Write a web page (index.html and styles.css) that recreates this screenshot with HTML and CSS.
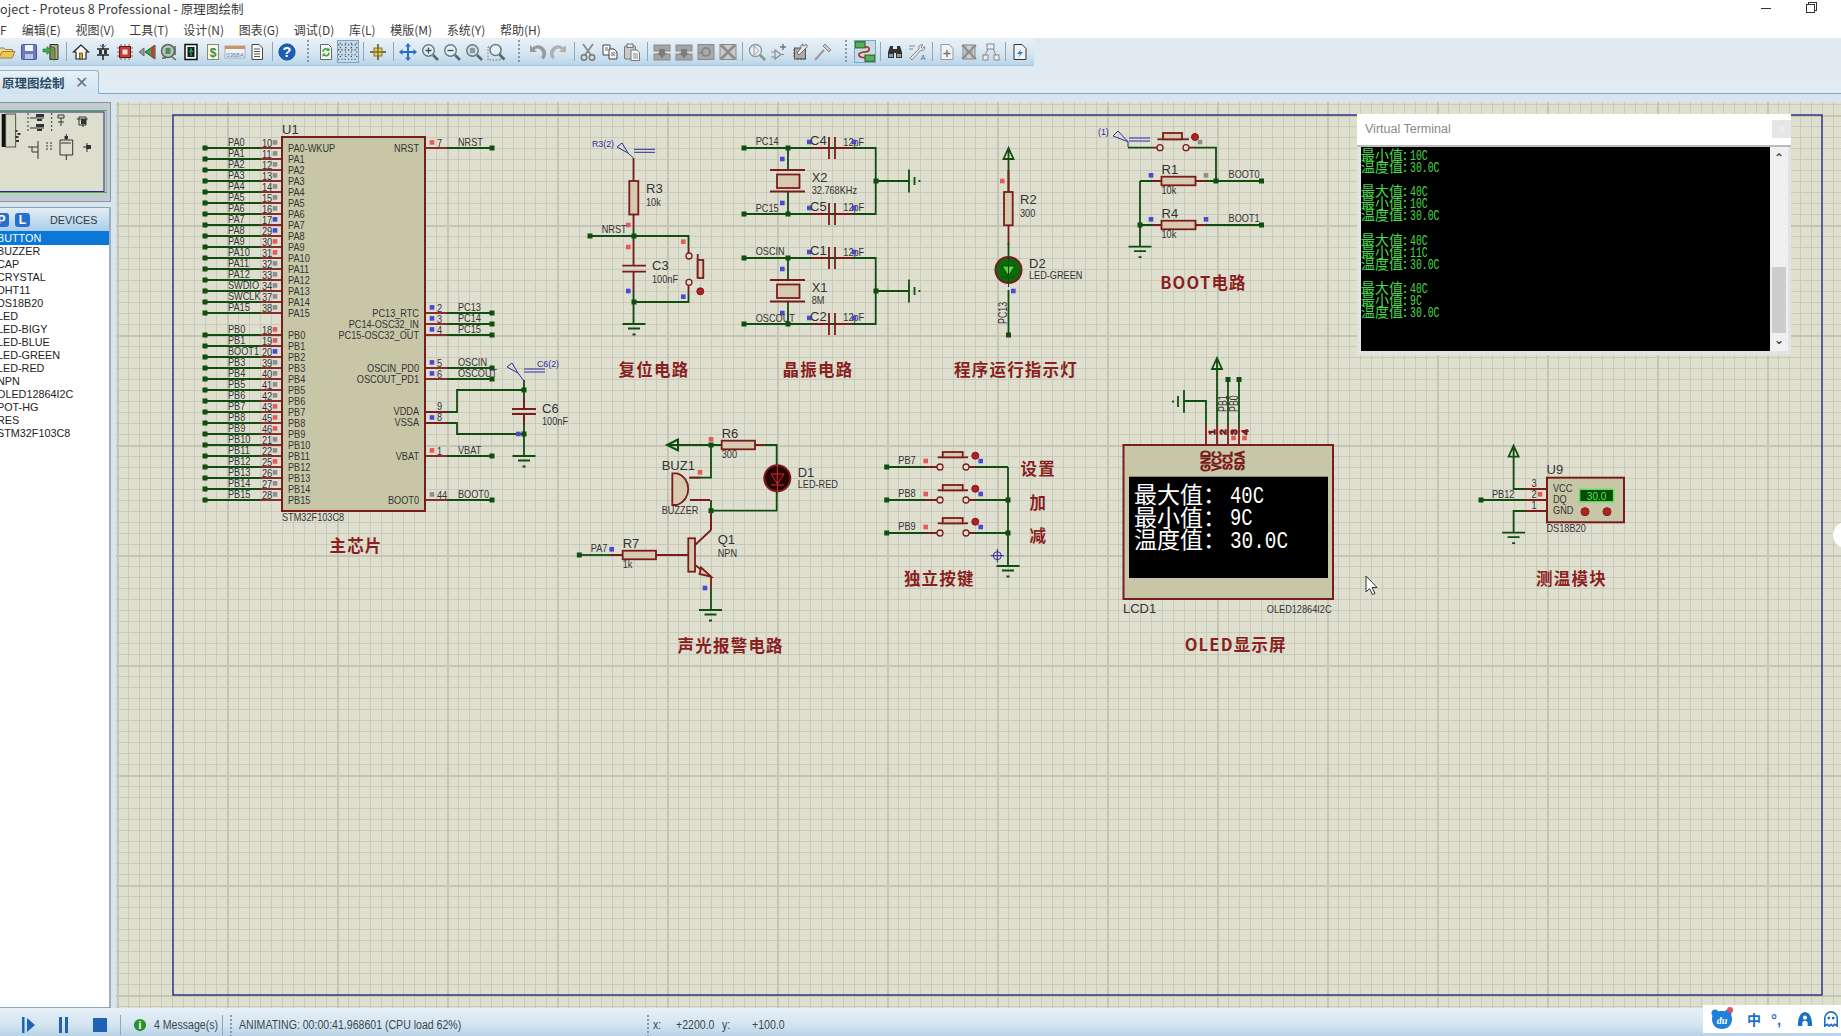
FILE: index.html
```html
<!DOCTYPE html>
<html lang="zh">
<head>
<meta charset="utf-8">
<title>Proteus 8 Professional - 原理图绘制</title>
<link rel="stylesheet" href="styles.css">
</head>
<body>
<svg class="sprite" aria-hidden="true">
<defs>
<symbol id="i-folder" viewBox="0 0 18 18"><path d="M1 15V5h5l1.500 1.500h7V9" fill="#f3d98a" stroke="#9a8240"/><path d="M1 15l3-6.500h13L14 15z" fill="#ecc757" stroke="#9a8240"/></symbol>
<symbol id="i-save" viewBox="0 0 18 18"><rect x="1.500" y="1.500" width="15" height="15" rx="1" fill="#6e78bd" stroke="#4c5694"/><rect x="5" y="2" width="8" height="6" fill="#f2f4fb"/><rect x="5" y="11" width="8" height="5" fill="#bcc5e6"/></symbol>
<symbol id="i-import" viewBox="0 0 18 18"><path d="M8 1.500h8v15H8z" fill="#a9b27a" stroke="#333"/><path d="M8 3l5 2v12l-5-1z" fill="#7f8f4c" stroke="#333" stroke-width=".6"/><path d="M1 6h4V3.500L9 7.500 5 11.500V9H1z" fill="#37b24a" stroke="#167028" stroke-width=".6"/></symbol>
<symbol id="i-home" viewBox="0 0 18 18"><path d="M9 2L1.500 9H4v7h10V9h2.500z" fill="#fffdf2" stroke="#222" stroke-width="1.200"/><rect x="7.500" y="10" width="3" height="6" fill="#d19a3a" stroke="#222" stroke-width=".6"/></symbol>
<symbol id="i-comp" viewBox="0 0 18 18"><path d="M9 1v5M9 12v5M3 6h12M3 12h12" stroke="#222" stroke-width="1.500" fill="none"/><path d="M5 7h3v4H5zM10 7h3v4h-3z" fill="#333"/><path d="M6 2l3 3 3-3" stroke="#667" fill="none"/></symbol>
<symbol id="i-chip" viewBox="0 0 18 18"><path d="M1 5h16M1 9h16M1 13h16M5 1v16M9 1v16M13 1v16" stroke="#7d6a50"/><rect x="3.500" y="3.500" width="11" height="11" fill="#c43a3a" stroke="#7a1010"/><rect x="6.500" y="6.500" width="5" height="5" fill="#f4dede"/></symbol>
<symbol id="i-tape" viewBox="0 0 18 18"><path d="M1 9l5-4v8z" fill="#9aa090" stroke="#667"/><path d="M7 9l10-7v14z" fill="#35a84a" stroke="#1d5e2a"/><path d="M13 4v10l4 2V2z" fill="#b04838"/></symbol>
<symbol id="i-gear" viewBox="0 0 18 18"><circle cx="8" cy="8" r="6.500" fill="#b9c3b5" stroke="#5c6a5c" stroke-width="1.500"/><rect x="5.500" y="5" width="5" height="6" fill="#4f8c5c"/><path d="M2 15h4M12 14l4 3M15 3v9" stroke="#55635a" stroke-width="1.500"/></symbol>
<symbol id="i-docg" viewBox="0 0 18 18"><rect x="3" y="1.500" width="12" height="15" fill="#f4f4ea" stroke="#111" stroke-width="1.500"/><rect x="5.500" y="4" width="7" height="10" fill="#10232c"/><path d="M9 5v8M7 9l2-2 2 2" stroke="#33cc55" fill="none"/></symbol>
<symbol id="i-dollar" viewBox="0 0 18 18"><rect x="3.500" y="1.500" width="11" height="15" fill="#f7f6e6" stroke="#8a8a78"/><text x="9" y="13.500" class="ic-text ic-green">$</text></symbol>
<symbol id="i-bom" viewBox="0 0 22 18"><rect x="1" y="3" width="20" height="12" fill="#eef3f7" stroke="#aab"/><rect x="1" y="3" width="20" height="3" fill="#d09060"/><text x="11" y="13.500" class="ic-mini">0368A</text></symbol>
<symbol id="i-doc" viewBox="0 0 18 18"><path d="M4 1.500h7l3.500 3.500v11.500H4z" fill="#fbfbf7" stroke="#444"/><path d="M6 6h6M6 8.500h6M6 11h6M6 13.500h6" stroke="#555"/></symbol>
<symbol id="i-help" viewBox="0 0 20 20"><circle cx="10" cy="10" r="9" fill="#1d5fb6" stroke="#124a92"/><text x="10" y="15.500" class="ic-text ic-q">?</text></symbol>
<symbol id="i-refresh" viewBox="0 0 18 18"><path d="M3.500 1.500h8l3 3v12h-11z" fill="#f4f7ee" stroke="#667"/><path d="M6 9a3 3 0 0 1 5-2.500M12 9.500a3 3 0 0 1-5 2.500" fill="none" stroke="#3ca13c" stroke-width="1.500"/><path d="M12.500 4.500v3.500H9zM5.500 14v-3.500H9z" fill="#3ca13c"/></symbol>
<symbol id="i-grid" viewBox="0 0 20 18"><path d="M1 3h18M1 7.500h18M1 12h18M1 16h18" stroke="#333" stroke-dasharray="1 2"/><path d="M3 1v16M8 1v16M13 1v16M18 1v16" stroke="#333" stroke-dasharray="1 3"/></symbol>
<symbol id="i-origin" viewBox="0 0 18 18"><path d="M9 1v16M1 9h16" stroke="#5a4a20" stroke-width="1.500"/><rect x="5" y="5" width="8" height="8" fill="#e5c960" stroke="#8a7420"/><path d="M9 5v8M5 9h8" stroke="#5a4a20"/></symbol>
<symbol id="i-move" viewBox="0 0 18 18"><path d="M9 0l3 3.500h-2V8h4.500V6L18 9l-3.500 3v-2H10v4.500h2L9 18l-3-3.500h2V10H3.500v2L0 9l3.500-3v2H8V3.500H6z" fill="#2a6fc7"/></symbol>
<symbol id="i-zin" viewBox="0 0 18 18"><circle cx="7.500" cy="7.500" r="5.800" fill="#e6eef2" stroke="#667a80" stroke-width="1.400"/><path d="M12 12l5 5" stroke="#59666c" stroke-width="2.500"/><path d="M4.500 7.500h6M7.500 4.500v6" stroke="#34505a" stroke-width="1.300"/></symbol>
<symbol id="i-zout" viewBox="0 0 18 18"><circle cx="7.500" cy="7.500" r="5.800" fill="#e6eef2" stroke="#667a80" stroke-width="1.400"/><path d="M12 12l5 5" stroke="#59666c" stroke-width="2.500"/><path d="M4.500 7.500h6" stroke="#34505a" stroke-width="1.300"/></symbol>
<symbol id="i-zall" viewBox="0 0 18 18"><circle cx="7.500" cy="7.500" r="5.800" fill="#cfdbe0" stroke="#667a80" stroke-width="1.400"/><path d="M12 12l5 5" stroke="#59666c" stroke-width="2.500"/><rect x="5" y="5" width="5" height="5" fill="#889aa3"/></symbol>
<symbol id="i-zarea" viewBox="0 0 18 18"><path d="M1 4h13v13H1z" fill="none" stroke="#777" stroke-dasharray="1.500 1.500"/><circle cx="8.500" cy="7" r="5.500" fill="#e6eef2" stroke="#667a80" stroke-width="1.400"/><path d="M12.500 11.500l5 5" stroke="#59666c" stroke-width="2.500"/></symbol>
<symbol id="i-undo" viewBox="0 0 18 18"><path d="M2 2v7h7L6.500 6.500A5 5 0 0 1 13 14l2.500 2.500A8 8 0 0 0 4.500 4.500z" fill="#9a9a9a"/></symbol>
<symbol id="i-redo" viewBox="0 0 18 18"><path d="M16 2v7H9l2.500-2.500A5 5 0 0 0 5 14l-2.500 2.500A8 8 0 0 1 13.500 4.500z" fill="#b0b0b0"/></symbol>
<symbol id="i-cut" viewBox="0 0 18 18"><path d="M4 1l8 11M14 1L6 12" stroke="#8a8a8a" stroke-width="1.800"/><circle cx="5" cy="14.500" r="2.700" fill="none" stroke="#777" stroke-width="1.500"/><circle cx="13" cy="14.500" r="2.700" fill="none" stroke="#777" stroke-width="1.500"/></symbol>
<symbol id="i-copy" viewBox="0 0 18 18"><path d="M2 2h7v10H2z" fill="#fff" stroke="#444"/><path d="M8 6h5l3 3v7H8z" fill="#f4f4f4" stroke="#444"/><path d="M10 10h4M10 12h4M4 5h3M4 7h3" stroke="#666"/></symbol>
<symbol id="i-paste" viewBox="0 0 18 18"><rect x="1.500" y="3" width="11" height="13" rx="1" fill="#c9c9c9" stroke="#777"/><rect x="4" y="1" width="6" height="3.500" fill="#e7e7e7" stroke="#777"/><path d="M8 7h6l2.500 2.500v8H8z" fill="#fafafa" stroke="#777"/><path d="M10 11h5M10 13h5M10 15h5" stroke="#888"/></symbol>
<symbol id="i-b1" viewBox="0 0 18 18"><rect x="1" y="2" width="16" height="6" fill="#a4a4a4" stroke="#8a8a8a"/><rect x="1" y="11" width="16" height="6" fill="#a4a4a4" stroke="#8a8a8a"/><path d="M6 6h6v4h2l-5 5-5-5h2z" fill="#7d7d7d"/></symbol>
<symbol id="i-b2" viewBox="0 0 18 18"><rect x="1" y="1.500" width="16" height="15" fill="#a8a8a8" stroke="#8a8a8a"/><circle cx="9" cy="9" r="4" fill="none" stroke="#7d7d7d" stroke-width="1.500"/><path d="M2 9h3l-1.500 2z" fill="#7d7d7d"/></symbol>
<symbol id="i-b3" viewBox="0 0 18 18"><rect x="1" y="1.500" width="16" height="15" fill="#c8c8c8" stroke="#8a8a8a"/><path d="M2 2l14 14M16 2L2 16" stroke="#8c8c8c" stroke-width="2.500"/></symbol>
<symbol id="i-ssim" viewBox="0 0 18 18"><circle cx="7.500" cy="7.500" r="6" fill="#eef2f2" stroke="#8a9a9a" stroke-width="1.400"/><path d="M12 12l5 5" stroke="#8a8f8f" stroke-width="2.500"/><path d="M6 3v9M6 3l5 4.500L6 12" fill="none" stroke="#99a"/></symbol>
<symbol id="i-amp" viewBox="0 0 18 18"><path d="M5 7v9l6-4.500zM1 9h4M1 14h4M11 11.500h3" fill="none" stroke="#8a8f8f" stroke-width="1.200"/><path d="M13 1v6M10 4h6" stroke="#777" stroke-width="1.500"/></symbol>
<symbol id="i-chipw" viewBox="0 0 18 18"><rect x="2.500" y="5" width="11" height="11" fill="#aaa" stroke="#555"/><path d="M1 7h2M1 10h2M1 13h2M6 17v-2M9 17v-2M12 17v-2" stroke="#555"/><path d="M7 12l8-8a2.500 2.500 0 0 0-1-3l-1.500 2-2-.5L11 1a3 3 0 0 0-2 4L5 10z" fill="#e8e8e8" stroke="#555" stroke-width=".8"/></symbol>
<symbol id="i-hammer" viewBox="0 0 18 18"><path d="M1 17L10 7" stroke="#999" stroke-width="2"/><path d="M9 3l6 6 2-2-6-6z" fill="#c9c9c9" stroke="#888"/></symbol>
<symbol id="i-net" viewBox="0 0 18 18"><path d="M8 5c6 0 6 4 0 4.500S3 14 9 14" fill="none" stroke="#b33828" stroke-width="1.500"/><rect x="1" y="1" width="8" height="5" fill="#58b058" stroke="#2e6e2e"/><rect x="9" y="12" width="8" height="5" fill="#58b058" stroke="#2e6e2e"/></symbol>
<symbol id="i-bino" viewBox="0 0 18 18"><path d="M2 9l2-6h3v3h4V3h3l2 6v6H10V10H8v5H2z" fill="#333"/><rect x="3" y="11" width="4" height="3" fill="#999"/><rect x="11" y="11" width="4" height="3" fill="#999"/></symbol>
<symbol id="i-wrencha" viewBox="0 0 18 18"><path d="M1 3h6M1 6h4" stroke="#888"/><path d="M2 15L11 6a3 3 0 0 1 4-4l-2 2 1.500 1.500 2-2a3 3 0 0 1-4 4L4 17z" fill="#e8e8e8" stroke="#888"/><text x="15" y="17" class="ic-a">A</text></symbol>
<symbol id="i-plus" viewBox="0 0 18 18"><path d="M3 1.500h8l4 4v11H3z" fill="#f1f3f5" stroke="#999"/><path d="M9 7v7M5.500 10.500h7" stroke="#777" stroke-width="1.500"/></symbol>
<symbol id="i-xsheet" viewBox="0 0 18 18"><path d="M3 2h12v14H3z" fill="#ccc" stroke="#888"/><path d="M2 2l14 14M16 2L2 16" stroke="#8a8a8a" stroke-width="1.800"/><path d="M6 1v16M12 1v16" stroke="#999"/></symbol>
<symbol id="i-tree" viewBox="0 0 18 18"><rect x="5" y="1" width="7" height="5" fill="#eee" stroke="#888"/><rect x="1" y="12" width="5" height="5" fill="#eee" stroke="#888"/><rect x="12" y="12" width="5" height="5" fill="#eee" stroke="#888"/><path d="M6 6l-3 6M11 6l3 6" stroke="#888"/></symbol>
<symbol id="i-bolt" viewBox="0 0 18 18"><path d="M3 1.500h8l4 4v11H3z" fill="#eef4f8" stroke="#333"/><path d="M10 6L6 11h3l-2 4 5-6H9z" fill="#2a80cc"/></symbol>

<pattern id="grid-minor" patternUnits="userSpaceOnUse" x="7" y="5" width="11" height="11"><rect class="gm" width="11" height="1"/><rect class="gm" width="1" height="11"/></pattern>
<pattern id="grid-major" patternUnits="userSpaceOnUse" x="117" y="115" width="110" height="110"><rect class="gM" width="110" height="2"/><rect class="gM" width="2" height="110"/></pattern>

<rect id="dot" class="d" x="-2.500" y="-2.500" width="5" height="5"/>
<rect id="m" x="-2.300" y="-2.300" width="4.600" height="4.600"/>
<g id="pl"><path class="w" d="M205 0H260"/><path class="p" d="M260 0H281"/><use href="#dot" x="205"/></g>
<g id="pr"><path class="p" d="M425 0H447"/><path class="w" d="M447 0H492"/><use href="#dot" x="492"/></g>
<g id="gnd"><path class="w" d="M-11.500 0H11.500M-6 4.500H6M-1.500 10.500H1.500"/></g>
<path id="pw" class="w" d="M0 0L-5 11H5ZM0 0V11"/>
<g id="gndh"><path class="w" d="M0 -11.500V11.500M5.500 -4V4M10.500 -1V1"/></g>
<g id="xtal"><path class="p" d="M-18 0H17M-18 21.500H17"/><rect class="b2" x="-11" y="4.500" width="22.500" height="13.500"/></g>
<g id="capvb"><rect class="cv" x="812" y="-1" width="40" height="2"/><path class="p" d="M812 0H829M835 0H852M829 -11V11M835 -11V11"/></g>
<g id="xcell">
  <path class="w" d="M744 0H875.700V66H744"/>
  <path class="w" d="M788 0V22M788 44V66"/>
  <use href="#dot" x="744"/><use href="#dot" x="744" y="66"/><use href="#dot" x="788"/><use href="#dot" x="788" y="66"/>
  <use href="#xtal" x="788" y="22"/>
  <use href="#capvb"/><use href="#capvb" y="66"/>
  <use href="#dot" x="876" y="33"/>
  <path class="w" d="M876 33H909"/>
  <use href="#gndh" x="909" y="33"/>
  <use class="mb" href="#m" x="782.300" y="11"/><use class="mb" href="#m" x="782.300" y="55"/>
  <text class="t" x="843.300" y="-2.500">12pF</text><text class="t" x="843.300" y="63.500">12pF</text>
  <use class="mb" href="#m" x="809.300" y="-6"/><use class="mb" href="#m" x="854" y="-6"/>
  <use class="mb" href="#m" x="809.300" y="60"/><use class="mb" href="#m" x="854" y="60"/>
</g>
<g id="btn">
  <path class="w" d="M886.700 0H925M972 0H1008"/><path class="p" d="M925 0H937M969 0H975"/>
  <use href="#dot" x="886.700"/>
  <circle class="c" cx="940" cy="0" r="3"/><circle class="c" cx="966" cy="0" r="3"/>
  <path class="p" d="M937.700 -9.700H968"/><rect class="b2" x="942.700" y="-15" width="20" height="5.300"/>
  <circle class="rd" cx="975.300" cy="-11.300" r="3.500"/>
  <use class="mb" href="#m" x="980.700" y="-6"/><use class="mr" href="#m" x="925.700" y="-6"/>
</g>
<g id="res"><rect class="b2" x="0" y="-4.300" width="34" height="8.600"/></g>
</defs>
</svg>

<div class="app">
  <header class="titlebar">
    <span class="title-text">oject - Proteus 8 Professional - 原理图绘制</span>
    <span class="win-btns"><i class="win-min"></i><i class="win-restore"></i></span>
  </header>
  <nav class="menubar">
    <span class="menu-first">F)</span><span>编辑(E)</span><span>视图(V)</span><span>工具(T)</span><span>设计(N)</span><span>图表(G)</span><span>调试(D)</span><span>库(L)</span><span>模版(M)</span><span>系统(Y)</span><span>帮助(H)</span>
  </nav>
  <div class="toolband">
    <div class="toolbar">
      <svg class="ic first"><use href="#i-folder"/></svg><svg class="ic"><use href="#i-save"/></svg><svg class="ic"><use href="#i-import"/></svg><i class="sep"></i>
      <svg class="ic"><use href="#i-home"/></svg><svg class="ic"><use href="#i-comp"/></svg><svg class="ic"><use href="#i-chip"/></svg><svg class="ic"><use href="#i-tape"/></svg><svg class="ic"><use href="#i-gear"/></svg><svg class="ic"><use href="#i-docg"/></svg><svg class="ic"><use href="#i-dollar"/></svg><svg class="ic"><use href="#i-bom"/></svg><svg class="ic"><use href="#i-doc"/></svg><i class="sep"></i>
      <svg class="ic"><use href="#i-help"/></svg><i class="grip g1"></i>
      <svg class="ic"><use href="#i-refresh"/></svg><svg class="ic on"><use href="#i-grid"/></svg><i class="sep"></i><svg class="ic"><use href="#i-origin"/></svg><i class="sep"></i>
      <svg class="ic"><use href="#i-move"/></svg><svg class="ic"><use href="#i-zin"/></svg><svg class="ic"><use href="#i-zout"/></svg><svg class="ic"><use href="#i-zall"/></svg><svg class="ic"><use href="#i-zarea"/></svg><i class="grip g2"></i>
      <svg class="ic"><use href="#i-undo"/></svg><svg class="ic"><use href="#i-redo"/></svg><i class="sep s2"></i>
      <svg class="ic"><use href="#i-cut"/></svg><svg class="ic"><use href="#i-copy"/></svg><svg class="ic"><use href="#i-paste"/></svg><i class="sep"></i>
      <svg class="ic"><use href="#i-b1"/></svg><svg class="ic"><use href="#i-b1"/></svg><svg class="ic"><use href="#i-b2"/></svg><svg class="ic"><use href="#i-b3"/></svg><i class="sep s3"></i>
      <svg class="ic"><use href="#i-ssim"/></svg><svg class="ic"><use href="#i-amp"/></svg><svg class="ic"><use href="#i-chipw"/></svg><svg class="ic"><use href="#i-hammer"/></svg><i class="grip g3"></i>
      <svg class="ic on"><use href="#i-net"/></svg><i class="sep"></i>
      <svg class="ic"><use href="#i-bino"/></svg><svg class="ic"><use href="#i-wrencha"/></svg><i class="sep"></i>
      <svg class="ic"><use href="#i-plus"/></svg><svg class="ic"><use href="#i-xsheet"/></svg><svg class="ic"><use href="#i-tree"/></svg><i class="sep s3"></i>
      <svg class="ic"><use href="#i-bolt"/></svg>
    </div>
  </div>
  <div class="tabband">
    <div class="tab"><span class="tab-label">原理图绘制</span><span class="tab-x">✕</span></div>
  </div>
  <main class="main">
    <aside class="side">
      <div class="overview">
        <svg class="ov-svg" viewBox="0 0 107 83">
          <rect class="ov-frame" x="-3" y="0.500" width="110" height="82"/>
          <rect class="ov-line" x="-4" y="2" width="108" height="79.500"/>
          <rect class="ov-bar" x="1.700" y="4" width="4" height="33"/>
          <rect class="ov-chip" x="5.700" y="4" width="10" height="33"/>
          <path class="ov-blk" d="M15.500 20h2v2h-2zM15.500 26h3v2h-3zM17.500 23h3v2h-3zM16 30h3v2h-3z"/>
          <path class="ov-dash" d="M28 3v20M51.700 3v20"/>
          <path class="ov-wire" d="M58 5h6v3h-6zM58 12h6M61 8v8M76.700 9h11M79 7h7v8h-7zM83 11v6M30 8h14M30 18h14M38 31v6M32 37h6v5h-6zM38 42v7M28 37h4M60 30h12.700v15H60zM66.300 24v6M66.300 45v5M61 33h10M83 37h4M87 33v9"/>
          <path class="ov-blk" d="M36 4h8v3h-8zM37 9h5v2h-5zM36 14h8v3h-8zM37 19h5v2h-5zM64.500 26h3.500v3h-3.500zM81 9h5v5h-5zM86 35h5v4h-5z"/>
          <path class="ov-dash" d="M46 33h8M46 36h8M46 39h8"/>
        </svg>
      </div>
      <section class="devices">
        <div class="dev-head"><b class="pl-btn p">P</b><b class="pl-btn l">L</b><span class="dev-title">DEVICES</span></div>
        <ul class="dev-list">
          <li class="sel">BUTTON</li><li>BUZZER</li><li>CAP</li><li>CRYSTAL</li><li>DHT11</li><li>DS18B20</li><li>LED</li><li>LED-BIGY</li><li>LED-BLUE</li><li>LED-GREEN</li><li>LED-RED</li><li>NPN</li><li>OLED12864I2C</li><li>POT-HG</li><li>RES</li><li>STM32F103C8</li>
        </ul>
      </section>
    </aside>
    <section class="canvas">
      <svg class="sheet" viewBox="116 102 1725 906" width="1725" height="906">
        <rect x="116" y="102" width="1725" height="906" class="bg"/>
        <rect x="116" y="102" width="1725" height="906" fill="url(#grid-minor)"/>
        <rect x="116" y="102" width="1725" height="906" fill="url(#grid-major)"/>
        <rect class="border" x="173" y="115" width="1649" height="880"/>

        <!-- U1 -->
        <rect class="chip" x="282" y="137" width="143" height="374"/>
        <text class="big" x="282" y="134">U1</text>
        <text class="t" x="282" y="521">STM32F103C8</text>
        <text class="ttl" x="356" y="552">主芯片</text>

        <g transform="translate(0 148)"><use href="#pl"/><text class="t" x="228" y="-2">PA0</text><text class="t" x="262" y="-1.500">10</text><use class="mg" href="#m" x="275" y="-5.600"/><text class="t" x="288" y="3.500">PA0-WKUP</text></g>
        <g transform="translate(0 159)"><use href="#pl"/><text class="t" x="228" y="-2">PA1</text><text class="t" x="262" y="-1.500">11</text><use class="mg" href="#m" x="275" y="-5.600"/><text class="t" x="288" y="3.500">PA1</text></g>
        <g transform="translate(0 170)"><use href="#pl"/><text class="t" x="228" y="-2">PA2</text><text class="t" x="262" y="-1.500">12</text><use class="mg" href="#m" x="275" y="-5.600"/><text class="t" x="288" y="3.500">PA2</text></g>
        <g transform="translate(0 181)"><use href="#pl"/><text class="t" x="228" y="-2">PA3</text><text class="t" x="262" y="-1.500">13</text><use class="mg" href="#m" x="275" y="-5.600"/><text class="t" x="288" y="3.500">PA3</text></g>
        <g transform="translate(0 192)"><use href="#pl"/><text class="t" x="228" y="-2">PA4</text><text class="t" x="262" y="-1.500">14</text><use class="mg" href="#m" x="275" y="-5.600"/><text class="t" x="288" y="3.500">PA4</text></g>
        <g transform="translate(0 203)"><use href="#pl"/><text class="t" x="228" y="-2">PA5</text><text class="t" x="262" y="-1.500">15</text><use class="mg" href="#m" x="275" y="-5.600"/><text class="t" x="288" y="3.500">PA5</text></g>
        <g transform="translate(0 214)"><use href="#pl"/><text class="t" x="228" y="-2">PA6</text><text class="t" x="262" y="-1.500">16</text><use class="mg" href="#m" x="275" y="-5.600"/><text class="t" x="288" y="3.500">PA6</text></g>
        <g transform="translate(0 225)"><use href="#pl"/><text class="t" x="228" y="-2">PA7</text><text class="t" x="262" y="-1.500">17</text><use class="mb" href="#m" x="275" y="-5.600"/><text class="t" x="288" y="3.500">PA7</text></g>
        <g transform="translate(0 236)"><use href="#pl"/><text class="t" x="228" y="-2">PA8</text><text class="t" x="262" y="-1.500">29</text><use class="mb" href="#m" x="275" y="-5.600"/><text class="t" x="288" y="3.500">PA8</text></g>
        <g transform="translate(0 247)"><use href="#pl"/><text class="t" x="228" y="-2">PA9</text><text class="t" x="262" y="-1.500">30</text><use class="mr" href="#m" x="275" y="-5.600"/><text class="t" x="288" y="3.500">PA9</text></g>
        <g transform="translate(0 258)"><use href="#pl"/><text class="t" x="228" y="-2">PA10</text><text class="t" x="262" y="-1.500">31</text><use class="mr" href="#m" x="275" y="-5.600"/><text class="t" x="288" y="3.500">PA10</text></g>
        <g transform="translate(0 269)"><use href="#pl"/><text class="t" x="228" y="-2">PA11</text><text class="t" x="262" y="-1.500">32</text><use class="mg" href="#m" x="275" y="-5.600"/><text class="t" x="288" y="3.500">PA11</text></g>
        <g transform="translate(0 280)"><use href="#pl"/><text class="t" x="228" y="-2">PA12</text><text class="t" x="262" y="-1.500">33</text><use class="mg" href="#m" x="275" y="-5.600"/><text class="t" x="288" y="3.500">PA12</text></g>
        <g transform="translate(0 291)"><use href="#pl"/><text class="t" x="228" y="-2">SWDIO</text><text class="t" x="262" y="-1.500">34</text><use class="mg" href="#m" x="275" y="-5.600"/><text class="t" x="288" y="3.500">PA13</text></g>
        <g transform="translate(0 302)"><use href="#pl"/><text class="t" x="228" y="-2">SWCLK</text><text class="t" x="262" y="-1.500">37</text><use class="mg" href="#m" x="275" y="-5.600"/><text class="t" x="288" y="3.500">PA14</text></g>
        <g transform="translate(0 313)"><use href="#pl"/><text class="t" x="228" y="-2">PA15</text><text class="t" x="262" y="-1.500">38</text><use class="mg" href="#m" x="275" y="-5.600"/><text class="t" x="288" y="3.500">PA15</text></g>

        <g transform="translate(0 335)"><use href="#pl"/><text class="t" x="228" y="-2">PB0</text><text class="t" x="262" y="-1.500">18</text><use class="mr" href="#m" x="275" y="-5.600"/><text class="t" x="288" y="3.500">PB0</text></g>
        <g transform="translate(0 346)"><use href="#pl"/><text class="t" x="228" y="-2">PB1</text><text class="t" x="262" y="-1.500">19</text><use class="mr" href="#m" x="275" y="-5.600"/><text class="t" x="288" y="3.500">PB1</text></g>
        <g transform="translate(0 357)"><use href="#pl"/><text class="t" x="228" y="-2">BOOT1</text><text class="t" x="262" y="-1.500">20</text><use class="mb" href="#m" x="275" y="-5.600"/><text class="t" x="288" y="3.500">PB2</text></g>
        <g transform="translate(0 368)"><use href="#pl"/><text class="t" x="228" y="-2">PB3</text><text class="t" x="262" y="-1.500">39</text><use class="mg" href="#m" x="275" y="-5.600"/><text class="t" x="288" y="3.500">PB3</text></g>
        <g transform="translate(0 379)"><use href="#pl"/><text class="t" x="228" y="-2">PB4</text><text class="t" x="262" y="-1.500">40</text><use class="mg" href="#m" x="275" y="-5.600"/><text class="t" x="288" y="3.500">PB4</text></g>
        <g transform="translate(0 390)"><use href="#pl"/><text class="t" x="228" y="-2">PB5</text><text class="t" x="262" y="-1.500">41</text><use class="mg" href="#m" x="275" y="-5.600"/><text class="t" x="288" y="3.500">PB5</text></g>
        <g transform="translate(0 401)"><use href="#pl"/><text class="t" x="228" y="-2">PB6</text><text class="t" x="262" y="-1.500">42</text><use class="mg" href="#m" x="275" y="-5.600"/><text class="t" x="288" y="3.500">PB6</text></g>
        <g transform="translate(0 412)"><use href="#pl"/><text class="t" x="228" y="-2">PB7</text><text class="t" x="262" y="-1.500">43</text><use class="mr" href="#m" x="275" y="-5.600"/><text class="t" x="288" y="3.500">PB7</text></g>
        <g transform="translate(0 423)"><use href="#pl"/><text class="t" x="228" y="-2">PB8</text><text class="t" x="262" y="-1.500">45</text><use class="mr" href="#m" x="275" y="-5.600"/><text class="t" x="288" y="3.500">PB8</text></g>
        <g transform="translate(0 434)"><use href="#pl"/><text class="t" x="228" y="-2">PB9</text><text class="t" x="262" y="-1.500">46</text><use class="mr" href="#m" x="275" y="-5.600"/><text class="t" x="288" y="3.500">PB9</text></g>
        <g transform="translate(0 445)"><use href="#pl"/><text class="t" x="228" y="-2">PB10</text><text class="t" x="262" y="-1.500">21</text><use class="mg" href="#m" x="275" y="-5.600"/><text class="t" x="288" y="3.500">PB10</text></g>
        <g transform="translate(0 456)"><use href="#pl"/><text class="t" x="228" y="-2">PB11</text><text class="t" x="262" y="-1.500">22</text><use class="mg" href="#m" x="275" y="-5.600"/><text class="t" x="288" y="3.500">PB11</text></g>
        <g transform="translate(0 467)"><use href="#pl"/><text class="t" x="228" y="-2">PB12</text><text class="t" x="262" y="-1.500">25</text><use class="mr" href="#m" x="275" y="-5.600"/><text class="t" x="288" y="3.500">PB12</text></g>
        <g transform="translate(0 478)"><use href="#pl"/><text class="t" x="228" y="-2">PB13</text><text class="t" x="262" y="-1.500">26</text><use class="mg" href="#m" x="275" y="-5.600"/><text class="t" x="288" y="3.500">PB13</text></g>
        <g transform="translate(0 489)"><use href="#pl"/><text class="t" x="228" y="-2">PB14</text><text class="t" x="262" y="-1.500">27</text><use class="mg" href="#m" x="275" y="-5.600"/><text class="t" x="288" y="3.500">PB14</text></g>
        <g transform="translate(0 500)"><use href="#pl"/><text class="t" x="228" y="-2">PB15</text><text class="t" x="262" y="-1.500">28</text><use class="mg" href="#m" x="275" y="-5.600"/><text class="t" x="288" y="3.500">PB15</text></g>

        <g transform="translate(0 148)"><use href="#pr"/><text class="t" x="458" y="-2">NRST</text><text class="t" x="437" y="-1.500">7</text><use class="mr" href="#m" x="432" y="-5.600"/><text class="t e" x="419" y="3.500">NRST</text></g>
        <g transform="translate(0 313)"><use href="#pr"/><text class="t" x="458" y="-2">PC13</text><text class="t" x="437" y="-1.500">2</text><use class="mb" href="#m" x="432" y="-5.600"/><text class="t e" x="419" y="3.500">PC13_RTC</text></g>
        <g transform="translate(0 324)"><use href="#pr"/><text class="t" x="458" y="-2">PC14</text><text class="t" x="437" y="-1.500">3</text><use class="mb" href="#m" x="432" y="-5.600"/><text class="t e" x="419" y="3.500">PC14-OSC32_IN</text></g>
        <g transform="translate(0 335)"><use href="#pr"/><text class="t" x="458" y="-2">PC15</text><text class="t" x="437" y="-1.500">4</text><use class="mb" href="#m" x="432" y="-5.600"/><text class="t e" x="419" y="3.500">PC15-OSC32_OUT</text></g>
        <g transform="translate(0 368)"><use href="#pr"/><text class="t" x="458" y="-2">OSCIN</text><text class="t" x="437" y="-1.500">5</text><use class="mb" href="#m" x="432" y="-5.600"/><text class="t e" x="419" y="3.500">OSCIN_PD0</text></g>
        <g transform="translate(0 379)"><use href="#pr"/><text class="t" x="458" y="-2">OSCOUT</text><text class="t" x="437" y="-1.500">6</text><use class="mb" href="#m" x="432" y="-5.600"/><text class="t e" x="419" y="3.500">OSCOUT_PD1</text></g>
        <g transform="translate(0 456)"><use href="#pr"/><text class="t" x="458" y="-2">VBAT</text><text class="t" x="437" y="-1.500">1</text><use class="mr" href="#m" x="432" y="-5.600"/><text class="t e" x="419" y="3.500">VBAT</text></g>
        <g transform="translate(0 500)"><use href="#pr"/><text class="t" x="458" y="-2">BOOT0</text><text class="t" x="437" y="-1.500">44</text><use class="mg" href="#m" x="432" y="-5.600"/><text class="t e" x="419" y="3.500">BOOT0</text></g>
        <path class="p" d="M425 412H447M425 423H447"/>
        <path class="w" d="M447 412H457V390H524M447 423H457V434H524"/>
        <text class="t e" x="419" y="415.500">VDDA</text><text class="t e" x="419" y="426.500">VSSA</text>
        <text class="t" x="437" y="410.500">9</text><text class="t" x="437" y="421.500">8</text>
        <use class="mb" href="#m" x="432" y="417.500"/>

        <!-- C6 -->
        <path class="w" d="M524 380V409M524 414V456"/>
        <path class="p" d="M512 409H536M512 414H536M524 398V409M524 414V425"/>
        <use href="#dot" x="524" y="390"/><use href="#dot" x="524" y="434"/>
        <use class="mb" href="#m" x="518.300" y="434"/>
        <use href="#gnd" x="524" y="456"/>
        <text class="big" x="542" y="413">C6</text><text class="t" x="542" y="425">100nF</text>
        <path class="prb" d="M518 373L507 367 512 363ZM518 373L524 381"/>
        <path class="prb" d="M524 369H545M524 372H545"/>
        <text class="tb" x="537" y="367">C6(2)</text>

        <!-- Reset -->
        <path class="prb" d="M628 153L617 147 622 143ZM628 153L633.500 158"/>
        <path class="prb" d="M634 149.300H655M634 152.300H655"/>
        <text class="tb" x="592" y="147">R3(2)</text>
        <path class="p" d="M633.500 158V181M633.500 214V228M633.500 240V266M633.500 272V290"/>
        <path class="w" d="M633.500 228V240M633.500 290V324"/>
        <rect class="b2" x="629.300" y="181" width="9" height="33.500"/>
        <path class="p" d="M622.300 265.700H646M622.300 271.700H646"/>
        <path class="w" d="M590 236H688.500V245M688.500 293V302H633.500"/>
        <path class="p" d="M688.500 245V253M688.500 285V293"/>
        <use href="#dot" x="590" y="236"/><use href="#dot" x="634" y="236"/><use href="#dot" x="634" y="302"/>
        <circle class="c" cx="689" cy="256" r="3"/><circle class="c" cx="689" cy="282.300" r="3"/>
        <path class="p" d="M697.700 254V278"/><rect class="b2" x="697.700" y="260" width="5.600" height="18"/>
        <circle class="rd" cx="700.300" cy="291.300" r="3.500"/>
        <use class="mr" href="#m" x="628.300" y="225"/><use class="mr" href="#m" x="628.300" y="247"/><use class="mb" href="#m" x="628.300" y="291"/>
        <use class="mr" href="#m" x="683.300" y="241.700"/><use class="mb" href="#m" x="683.300" y="296.700"/>
        <use href="#gnd" x="634" y="324"/>
        <text class="big" x="646" y="193">R3</text><text class="t" x="646" y="206">10k</text>
        <text class="big" x="652" y="270">C3</text><text class="t" x="652" y="283">100nF</text>
        <text class="t" x="601.700" y="233.500">NRST</text>
        <text class="ttl" x="654" y="376">复位电路</text>

        <!-- Crystals -->
        <use href="#xcell" y="148"/><use href="#xcell" y="258"/>
        <text class="t" x="755.700" y="145.300">PC14</text><text class="t" x="755.700" y="211.700">PC15</text>
        <text class="t" x="755.700" y="255.300">OSCIN</text><text class="t" x="755.700" y="321.700">OSCOUT</text>
        <text class="big" x="811.700" y="182">X2</text><text class="t" x="811.700" y="194">32.768KHz</text>
        <text class="big" x="811.700" y="292">X1</text><text class="t" x="811.700" y="304">8M</text>
        <text class="big" x="810" y="145">C4</text><text class="big" x="810" y="211">C5</text>
        <text class="big" x="810" y="255">C1</text><text class="big" x="810" y="321">C2</text>
        <text class="ttl" x="818" y="376">晶振电路</text>

        <!-- Run LED -->
        <use href="#pw" x="1008.500" y="148"/>
        <path class="w" d="M1008.500 159V191.700M1008.500 290V335"/>
        <path class="p" d="M1008.500 170V192M1008.500 225V245"/>
        <path class="w" d="M1008.500 243V258"/>
        <rect class="b2" x="1004" y="192" width="8.700" height="33.300"/>
        <circle class="ledg" cx="1008.500" cy="270" r="13"/>
        <path class="ledgi" d="M1002 266H1015L1008.500 276ZM1002 277H1015M1008.500 257V287"/>
        <use href="#dot" x="1008.500" y="335"/>
        <use class="mr" href="#m" x="1002.300" y="181"/><use class="mb" href="#m" x="1013.300" y="291"/>
        <text class="trl" transform="translate(1006.500 324) rotate(-90) scale(.74 1)">PC13</text>
        <text class="big" x="1020" y="203.500">R2</text><text class="t" x="1020" y="217">300</text>
        <text class="big" x="1029" y="268">D2</text><text class="t" x="1029" y="279.500">LED-GREEN</text>
        <text class="ttl" x="1016" y="376">程序运行指示灯</text>

        <!-- BOOT -->
        <path class="prb" d="M1128 141.700L1113 136 1118 131ZM1128 141.700L1128 147"/>
        <path class="prb" d="M1129 138H1150M1129 141H1150"/>
        <text class="tb" x="1098" y="134.500">(1)</text>
        <path class="w" d="M1128 147.700H1152M1194 147.700H1216V181"/>
        <path class="p" d="M1152 147.700H1157M1189 147.700H1194"/>
        <circle class="c" cx="1160" cy="147.700" r="3"/><circle class="c" cx="1186" cy="147.700" r="3"/>
        <path class="p" d="M1157.400 139.300H1189"/><rect class="b2" x="1163" y="133" width="19" height="6.300"/>
        <circle class="rd" cx="1195" cy="137" r="3.500"/>
        <use class="mg" href="#m" x="1200" y="142"/>
        <path class="w" d="M1140 181V246.700M1140 181H1152M1140 225H1152M1205 181H1261.500M1205 225H1261.500"/>
        <path class="p" d="M1152 181H1162M1196 181H1205M1152 225H1162M1196 225H1205"/>
        <use href="#res" x="1161.500" y="181"/><use href="#res" x="1161.500" y="225"/>
        <use href="#dot" x="1216" y="181"/><use href="#dot" x="1261.500" y="181"/><use href="#dot" x="1140" y="225"/><use href="#dot" x="1261.500" y="225"/>
        <use class="mb" href="#m" x="1151" y="175.300"/><use class="mg" href="#m" x="1206" y="175.300"/>
        <use class="mb" href="#m" x="1151" y="219.300"/><use class="mb" href="#m" x="1206" y="219.300"/>
        <use href="#gnd" x="1140" y="246.700"/>
        <text class="big" x="1161.500" y="174">R1</text><text class="t" x="1161.500" y="194">10k</text>
        <text class="big" x="1161.500" y="217.500">R4</text><text class="t" x="1161.500" y="238">10k</text>
        <text class="t" x="1228.600" y="178">BOOT0</text><text class="t" x="1228.600" y="222">BOOT1</text>
        <text class="ttl" x="1203.500" y="288.500">BOOT电路</text>

        <!-- Buzzer -->
        <path class="w" d="M666.700 445H722M755 445H776.700V465M776.700 491V510.700H711M711 445V477.700H690M711 500V530"/>
        <path class="p" d="M710 500H690M755 445H765M689 477.700H700M711 510V530"/>
        <path class="w3" d="M678 439.500L667 445 678 450.500Z"/>
        <rect class="b2" x="721.700" y="440.700" width="33.300" height="8.600"/>
        <use href="#dot" x="711" y="445"/><use href="#dot" x="711" y="510.700"/>
        <circle class="ledr" cx="777.300" cy="478.300" r="13"/>
        <path class="ledri" d="M771 474H784L777.500 484ZM771 485H784M777.300 465V491"/>
        <path class="b2" d="M672.300 473.300H677C692 478 692 500 677 505H672.300Z"/>
        <use class="mr" href="#m" x="711" y="439.300"/><use class="mr" href="#m" x="700" y="472.300"/>
        <text class="big" x="721.700" y="437.500">R6</text><text class="t" x="721.700" y="458.500">300</text>
        <text class="big" x="797.700" y="477">D1</text><text class="t" x="797.700" y="488.500">LED-RED</text>
        <text class="big" x="661.700" y="469.500">BUZ1</text><text class="t" x="661.700" y="514.500">BUZZER</text>
        <path class="w" d="M579.300 555H610"/><use href="#dot" x="579.300" y="555"/>
        <path class="p" d="M610 555H623M656 555H688"/>
        <rect class="b2" x="622.700" y="550.700" width="33.300" height="8.600"/>
        <rect class="b2" x="688.300" y="538.300" width="6.700" height="33.400"/>
        <path class="p" d="M695 545L711 530M695 565L711 576.700M711 576.700V588"/>
        <path class="b2" d="M701 567.500L711 576.700 699.500 574Z"/>
        <path class="w" d="M711 588V610"/><use href="#gnd" x="710.500" y="610"/>
        <use class="mb" href="#m" x="705" y="588"/><use class="mb" href="#m" x="611.700" y="549.300"/>
        <text class="t" x="590.700" y="552.500">PA7</text>
        <text class="big" x="622.700" y="547.500">R7</text><text class="t" x="622.700" y="568.500">1k</text>
        <text class="big" x="717.700" y="544">Q1</text><text class="t" x="717.700" y="556.700">NPN</text>
        <text class="ttl" x="730.700" y="651.500">声光报警电路</text>

        <!-- Keys -->
        <use href="#btn" y="467"/><use href="#btn" y="500"/><use href="#btn" y="533"/>
        <path class="w" d="M1008 467V566"/>
        <use href="#dot" x="1008" y="500"/><use href="#dot" x="1008" y="533"/>
        <use href="#gnd" x="1008" y="566"/>
        <text class="t" x="898.300" y="464">PB7</text><text class="t" x="898.300" y="497">PB8</text><text class="t" x="898.300" y="530">PB9</text>
        <text class="ttl" x="1038.300" y="475">设置</text><text class="ttl" x="1038.300" y="509">加</text><text class="ttl" x="1038.300" y="541.500">减</text>
        <text class="ttl" x="939.300" y="585">独立按键</text>
        <g class="target"><circle cx="997.300" cy="555.700" r="4"/><path d="M997.300 549V562.400M990.600 555.700H1004"/></g>

        <!-- OLED -->
        <path class="w" d="M1206 425V401H1184M1217 368V425M1228 379.500V425M1239 379.500V425"/>
        <path class="p" d="M1206 425V445M1217 425V445M1228 425V445M1239 425V445"/>
        <use href="#pw" x="1217" y="358"/>
        <use href="#dot" x="1228" y="379.500"/><use href="#dot" x="1239" y="379.500"/>
        <path class="w" d="M1184 390V412.700M1178 396V407M1173 400.500V402.500"/>
        <rect class="chip" x="1123.500" y="445" width="209.500" height="154"/>
        <rect class="oled" x="1129" y="476.700" width="199" height="101.300"/>
        <text class="trl c" transform="translate(1210.300 461) rotate(-90) scale(.78 1)">GND</text>
        <text class="trl c" transform="translate(1221 461) rotate(-90) scale(.78 1)">VCC</text>
        <text class="trl c" transform="translate(1232 461) rotate(-90) scale(.78 1)">SCL</text>
        <text class="trl c" transform="translate(1243.600 461) rotate(-90) scale(.78 1)">SDA</text>
        <text class="tr c" transform="translate(1215 432) rotate(-90)">1</text>
        <text class="tr c" transform="translate(1226 432) rotate(-90)">2</text>
        <text class="tr c" transform="translate(1237 432) rotate(-90)">3</text>
        <text class="tr c" transform="translate(1248 432) rotate(-90)">4</text>
        <text class="trl" transform="translate(1226.500 412) rotate(-90) scale(.74 1)">PB1</text>
        <text class="trl" transform="translate(1237.500 412) rotate(-90) scale(.74 1)">PB0</text>
        <use class="mr" href="#m" x="1233.500" y="438"/><use class="mr" href="#m" x="1244.500" y="438"/>
        <text class="oled-c" x="1134" y="503">最大值：</text><text class="oled-l" x="1230" y="502.700" textLength="34" lengthAdjust="spacingAndGlyphs">40C</text>
        <text class="oled-c" x="1134" y="526">最小值：</text><text class="oled-l" x="1230" y="525" textLength="22.500" lengthAdjust="spacingAndGlyphs">9C</text>
        <text class="oled-c" x="1134" y="548">温度值：</text><text class="oled-l" x="1230" y="548" textLength="58" lengthAdjust="spacingAndGlyphs">30.0C</text>
        <text class="big" x="1123" y="613">LCD1</text>
        <text class="t" x="1266.800" y="613.500">OLED12864I2C</text>
        <text class="ttl" x="1235.700" y="651">OLED显示屏</text>

        <!-- DS18B20 -->
        <rect class="chip" x="1547" y="477.700" width="77" height="44.600"/>
        <path class="w" d="M1525 489H1513.600V456.700M1525 511H1513.600V532.700M1525 500H1481"/>
        <path class="p" d="M1525 489H1547M1525 500H1547M1525 511H1547"/>
        <use href="#pw" x="1513.600" y="445.700"/>
        <use href="#dot" x="1481" y="500"/>
        <use href="#gnd" x="1513.600" y="532.700"/>
        <use class="mr" href="#m" x="1540" y="494.300"/>
        <text class="t" x="1531.500" y="487">3</text><text class="t" x="1531.500" y="498">2</text><text class="t" x="1531.500" y="509">1</text>
        <text class="t" x="1492" y="498">PB12</text>
        <text class="t" x="1553" y="492.500">VCC</text><text class="t" x="1553" y="503.500">DQ</text><text class="t" x="1553" y="514.500">GND</text>
        <rect class="ds-screen" x="1579.600" y="489.300" width="34" height="12.400"/>
        <text class="ds-val" x="1596.600" y="499.500">30.0</text>
        <circle class="rd" cx="1585" cy="511.700" r="4"/><circle class="rd" cx="1607" cy="511.700" r="4"/>
        <text class="big" x="1546.500" y="474">U9</text>
        <text class="t" x="1546.500" y="531.700">DS18B20</text>
        <text class="ttl" x="1571.500" y="585">测温模块</text>

        <path class="cursor" d="M1366 576V592L1369.500 588.500 1372.500 594.500 1375 593.500 1372 587.500H1377Z"/>
        <circle class="nub" cx="1846" cy="535" r="13"/>
      </svg>

      <div class="term">
        <div class="term-title"><span>Virtual Terminal</span><i class="term-close">x</i></div>
        <div class="term-body">
          <div class="term-screen">
            <div class="tl"><span class="k">最小值:</span><span class="v">10C</span></div>
            <div class="tl"><span class="k">温度值:</span><span class="v">30.0C</span></div>
            <div class="tl"></div>
            <div class="tl"><span class="k">最大值:</span><span class="v">40C</span></div>
            <div class="tl"><span class="k">最小值:</span><span class="v">10C</span></div>
            <div class="tl"><span class="k">温度值:</span><span class="v">30.0C</span></div>
            <div class="tl"></div>
            <div class="tl"><span class="k">最大值:</span><span class="v">40C</span></div>
            <div class="tl"><span class="k">最小值:</span><span class="v">11C</span></div>
            <div class="tl"><span class="k">温度值:</span><span class="v">30.0C</span></div>
            <div class="tl"></div>
            <div class="tl"><span class="k">最大值:</span><span class="v">40C</span></div>
            <div class="tl"><span class="k">最小值:</span><span class="v">9C</span></div>
            <div class="tl"><span class="k">温度值:</span><span class="v">30.0C</span></div>
          </div>
          <div class="term-scroll"><span class="arr">⌃</span><i class="thumb"></i><span class="arr dn">⌄</span></div>
        </div>
      </div>
    </section>
  </main>
  <footer class="status">
    <svg class="st-ic play" viewBox="0 0 14 18"><path d="M1 1h2.500v16H1z M6 2l8 7-8 7z" /></svg>
    <svg class="st-ic pause" viewBox="0 0 14 18"><path d="M2 1h3v16H2zM8 1h3v16H8z"/></svg>
    <svg class="st-ic stop" viewBox="0 0 14 18"><rect y="2" width="14" height="14"/></svg>
    <i class="sep st-sep"></i>
    <svg class="st-info" viewBox="0 0 16 16"><circle cx="8" cy="8" r="7" fill="#2f8f2f"/><text x="8" y="12.500" class="ic-text ic-i">i</text></svg>
    <span class="st-msg">4 Message(s)</span>
    <i class="sep st-sep2"></i><i class="grip st-grip"></i>
    <span class="st-anim">ANIMATING: 00:00:41.968601 (CPU load 62%)</span>
    <i class="grip st-grip2"></i>
    <span class="st-x">x:</span><span class="st-xv">+2200.0</span><span class="st-y">y:</span><span class="st-yv">+100.0</span>
  </footer>
  <div class="ime">
    <svg class="ime-bear" viewBox="0 0 24 24"><circle cx="5" cy="6" r="3.500" fill="#1e80d8"/><circle cx="18" cy="6" r="3.500" fill="#1e80d8"/><path d="M2 12c0-6 5-8 10-8s10 2 10 8-4 10-10 10S2 18 2 12z" fill="#1e80d8"/><circle cx="20" cy="3" r="3" fill="#e0506a"/><text x="12" y="17" class="ime-du">du</text></svg>
    <span class="ime-zh">中</span>
    <span class="ime-dot">°,</span>
    <svg class="ime-a" viewBox="0 0 18 18"><path d="M9 1c5 0 8 6 8 16h-5v-3a3 3 0 0 0-6 0v3H1C1 7 4 1 9 1z" fill="#1a6fc9"/><circle cx="9" cy="7.500" r="2.300" fill="#fff"/></svg>
    <svg class="ime-g" viewBox="0 0 18 18"><path d="M2 17V8a7 7 0 0 1 14 0v9l-3-2-2 2-2-2-2 2-2-2z" fill="none" stroke="#1a6fc9" stroke-width="1.800"/><circle cx="6.500" cy="8" r="1.600" fill="#1a6fc9"/><circle cx="11.500" cy="8" r="1.600" fill="#1a6fc9"/></svg>
  </div>
</div>
</body>
</html>
```

FILE: styles.css
```css
* { box-sizing: border-box; }
html, body { margin: 0; padding: 0; background: #fff; }
body { width: 1841px; height: 1036px; overflow: hidden; font-family: "Noto Sans CJK SC", "Liberation Sans", sans-serif; color: #333; }
.sprite { position: absolute; width: 0; height: 0; }
.app { position: relative; display: flex; flex-direction: column; width: 1841px; height: 1036px; overflow: hidden; background: #dfeaf2; }
.app > * { min-height: 0; }

/* title + menu */
.titlebar { flex: 0 0 17px; display: flex; align-items: center; justify-content: space-between; background: #fff; font-size: 12.500px; letter-spacing: .08px; line-height: 17px; color: #3a3a3a; white-space: nowrap; }
.win-btns { display: flex; align-items: center; gap: 35px; padding-right: 26px; }
.win-min { width: 10px; height: 1px; background: #333; }
.win-restore { width: 9px; height: 9px; border: 1px solid #333; box-shadow: 2px -2px 0 -1px #fff, 2px -2px 0 0 #333; }
.menubar { flex: 0 0 21px; display: flex; align-items: center; gap: 14.700px; background: #fff; font-size: 12px; line-height: 17px; color: #3c3c3c; white-space: nowrap; padding-top: 4px; }
.menu-first { width: 7px; overflow: hidden; }

/* toolbars */
.toolband { flex: 0 0 28px; display: flex; background: #dfeaf2; }
.toolbar { width: 1034px; height: 28px; display: flex; align-items: center; padding-left: 0; background: linear-gradient(#e8f1f8, #d7e6f1 55%, #b9d5e9); border-bottom: 1px solid #a8c6dc; overflow: hidden; }
.ic { flex: 0 0 22px; width: 22px; height: 18px; display: block; }
.ic.first { margin-left: -4px; }
.ic.on { height: 23px; background: #c3dbea; outline: 1px solid #7fa5c0; outline-offset: -1px; }
.sep { flex: 0 0 8px; width: 8px; height: 19px; background: linear-gradient(#8fa8ba, #8fa8ba) center / 1px 100% no-repeat; }
.sep.s2 { flex-basis: 8px; margin-right: -1px; }
.sep.s3 { flex-basis: 7px; }
.grip { flex: 0 0 6px; width: 6px; height: 25px; background: radial-gradient(circle, #7f9bb0 1px, transparent 1.200px) center top / 4px 4px repeat-y; }
.g1 { margin: 0 4px 0 7px; flex-basis: 6px; }
.g2 { margin: 0 4px 0 9px; }
.g3 { margin: 0 5px 0 9px; }
svg text { font-family: "Liberation Sans", sans-serif; }
.ic-text { font-weight: 700; text-anchor: middle; }
.ic-green { font-size: 12px; fill: #3d8a3d; }
.ic-q { font-size: 16px; fill: #fff; }
.ic-i { font-size: 12px; fill: #fff; }
.ic-mini { font-size: 6px; fill: #4478a8; text-anchor: middle; }
.ic-a { font-size: 7px; fill: #666; text-anchor: middle; }

/* tab */
.tabband { flex: 0 0 28px; display: flex; align-items: flex-end; background: linear-gradient(#dfeaf2, #e1ecf4); border-bottom: 1px solid #7ea6c8; }
.tab { width: 99px; height: 24px; margin-bottom: -1px; display: flex; align-items: center; background: linear-gradient(#e7f1f8, #cfe3f1); border: 1px solid #8fb4d0; border-left: 0; border-bottom: 0; border-radius: 0 3px 0 0; padding-left: 2px; white-space: nowrap; }
.tab-label { font-size: 12.500px; line-height: 18px; font-weight: 700; color: #2e4a62; width: 73px; }
.tab-x { font-family: "DejaVu Sans", sans-serif; font-size: 16px; line-height: 18px; font-weight: 700; color: #66727c; }

/* main */
.main { flex: 1 1 auto; display: flex; gap: 5px; padding-top: 8px; background: #d8e5ee; }
.side { flex: 0 0 111px; display: flex; flex-direction: column; gap: 5px; overflow: hidden; }
.overview { flex: 0 0 100px; background: #c3ccd2; border: 1px solid #8b979f; border-left: 0; padding-top: 7px; }
.ov-svg { display: block; width: 107px; height: 83px; }
.ov-frame { fill: none; stroke: #4cae4c; stroke-width: 1; }
.ov-line { fill: #dedecf; stroke: #1f2a80; stroke-width: 1; }
.ov-bar { fill: #111; }
.ov-chip { fill: #d9d9c8; stroke: #333; stroke-width: .8; }
.ov-wire { fill: none; stroke: #333; stroke-width: 1; }
.ov-dash { fill: none; stroke: #333; stroke-width: 1; stroke-dasharray: 2 2; }
.ov-blk { fill: #333; }

.devices { flex: 1 1 auto; min-height: 0; display: flex; flex-direction: column; background: #fff; border: 1px solid #8ba4b7; border-left: 0; border-right: 2px solid #9ab0c0; }
.dev-head { flex: 0 0 23px; display: flex; align-items: center; gap: 6px; background: linear-gradient(#e3edf5, #a9cde9); }
.pl-btn { width: 15px; height: 14px; border-radius: 3px; background: #2a6fd0; color: #fff; font-family: "Liberation Sans", sans-serif; font-size: 12px; line-height: 14px; text-align: center; }
.pl-btn.p { margin-left: -6px; }
.dev-title { margin-left: 14px; font-family: "Liberation Sans", sans-serif; font-size: 10.800px; color: #2c3a44; }
.dev-list { list-style: none; margin: 0; padding: 0; font-family: "Liberation Sans", sans-serif; font-size: 10.800px; line-height: 13px; color: #222; }
.dev-list li { height: 13px; text-indent: -3px; white-space: nowrap; }
.dev-list li.sel { height: 14px; line-height: 14px; background: #0a78d7; color: #fff; }

.canvas { position: relative; flex: 1 1 auto; min-width: 0; overflow: hidden; }
.sheet { display: block; }
.bg { fill: #dfdfd0; }
.gm { fill: #cacabb; }
.gM { fill: #c5c5b6; }
.border { fill: none; stroke: #1c1c84; stroke-width: 1.300; }

/* schematic: the small labels are condensed as in the reference */
.t { font-size: 10.200px; fill: #333; transform-box: fill-box; transform-origin: 0 50%; transform: scaleX(.9); }
.t.e { text-anchor: end; transform-origin: 100% 50%; }
.tr { font-size: 9.600px; fill: #333; }
.tr.c { text-anchor: middle; }
.trl { font-size: 12px; fill: #333; }
.trl.c { text-anchor: middle; }
.big { font-size: 13px; fill: #333; }
.tb { font-size: 8.800px; fill: #2c2ca0; }
svg text.ttl { font-family: "Noto Sans CJK SC", "Liberation Sans", sans-serif; font-size: 16.500px; font-weight: 700; letter-spacing: 1.200px; fill: #8a1f1f; text-anchor: middle; }
.w { fill: none; stroke: #104e10; stroke-width: 1.800; }
.p { fill: none; stroke: #7b1c1c; stroke-width: 1.800; }
.w3 { fill: none; stroke: #104e10; stroke-width: 2; }
.d { fill: #104e10; }
.b2 { fill: #d8cab0; stroke: #7b1c1c; stroke-width: 1.800; }
.chip { fill: #c7c7a8; stroke: #7b1c1c; stroke-width: 2; }
.cv { fill: #104e10; }
.c { fill: #dfdfd0; stroke: #7b1c1c; stroke-width: 1.300; }
.rd { fill: #b32020; stroke: #7b1c1c; stroke-width: 1; }
.mr { fill: #e65a5a; }
.mb { fill: #4a4ad6; }
.mg { fill: #8e8e8e; }
.prb { fill: none; stroke: #2c2ca0; stroke-width: 1; }
.ledg { fill: #0b6a0b; stroke: #7b1c1c; stroke-width: 2; }
.ledgi { fill: #59d23d; stroke: #0a4a0a; stroke-width: 1; }
.ledr { fill: #240404; stroke: #7b1c1c; stroke-width: 2; }
.ledri { fill: #3a0606; stroke: #c83030; stroke-width: 1; }
.target { fill: none; stroke: #2c2ca0; stroke-width: 1; }
.oled { fill: #000; }
svg text.oled-c { font-family: "Noto Sans CJK SC", sans-serif; font-size: 23px; fill: #fff; }
svg text.oled-l { font-family: "Liberation Mono", monospace; font-size: 23px; fill: #fff; }
.ds-screen { fill: #064a06; stroke: #5fe05f; stroke-width: 1.500; }
.ds-val { font-size: 10px; fill: #5fe05f; text-anchor: middle; }
.cursor { fill: #fff; stroke: #333; stroke-width: 1; }
.nub { fill: #fff; }

/* terminal window (floats over the sheet) */
.term { position: absolute; left: 1241px; top: 12px; width: 434px; height: 241px; display: flex; flex-direction: column; background: #e3e3e3; padding: 0 3px 4px 4px; }
.term-title { flex: 0 0 33px; display: flex; align-items: center; justify-content: space-between; margin: 0 -3px 0 -4px; padding: 0 0 1px 8px; background: #fff; border-bottom: 2px solid #bbb; font-family: "Liberation Sans", sans-serif; font-size: 12.500px; color: #888; }
.term-close { width: 19px; height: 18px; background: #e6e6e6; color: #f2f2f2; font-style: normal; font-size: 10px; text-align: center; line-height: 18px; }
.term-body { flex: 1 1 auto; min-height: 0; display: flex; }
.term-screen { flex: 1 1 auto; padding-top: 1px; background: #000; color: #46d846; font-size: 14px; overflow: hidden; }
.tl { height: 12.100px; line-height: 12.100px; white-space: nowrap; }
.tl .k { display: inline-block; width: 49px; font-family: "Noto Sans CJK SC", sans-serif; font-size: 14px; }
.tl .v { display: inline-block; font-family: "Liberation Mono", monospace; font-size: 14px; transform: scaleX(.7); transform-origin: left center; }
.term-scroll { flex: 0 0 18px; display: flex; flex-direction: column; align-items: center; justify-content: space-between; padding: 4px 0; background: #f0f0f0; }
.arr { font-family: "DejaVu Sans", sans-serif; font-size: 12px; line-height: 14px; color: #444; font-weight: 700; height: 14px; }
.thumb { width: 14px; height: 67px; margin-top: 102px; background: #cdcdcd; }

/* status */
.status { flex: 0 0 28px; display: flex; align-items: center; padding-top: 5px; background: linear-gradient(#e7f0f7, #d3e4f0 60%, #b8d3e6); font-family: "Liberation Sans", sans-serif; font-size: 12px; line-height: 14px; color: #3c464e; white-space: nowrap; }
.status span { transform: scaleX(.88); transform-origin: left center; }
.st-ic { height: 18px; fill: #1e63b8; flex: none; }
.play { width: 14px; margin-left: 21px; }
.pause { width: 14px; margin-left: 22px; }
.stop { width: 14px; margin-left: 22px; }
.st-sep { margin-left: 9px; flex-basis: 9px; height: 20px; }
.st-info { width: 14px; height: 14px; margin-left: 8px; flex: none; }
.st-msg { margin-left: 7px; width: 65px; }
.st-sep2 { margin-left: 0; flex-basis: 7px; height: 20px; }
.st-grip { margin-left: 2px; height: 22px; }
.st-anim { margin-left: 5px; width: 406px; }
.st-grip2 { margin-left: 0; height: 22px; }
.st-x { margin-left: 2px; width: 23px; }
.st-xv { width: 46px; }
.st-y { width: 30px; }
.st-yv { width: 60px; }

/* IME widget (floats over the status bar) */
.ime { position: absolute; right: 0; bottom: 3px; width: 138px; height: 28px; display: flex; align-items: center; gap: 10px; padding-left: 7px; background: #fff; }
.ime-bear { width: 24px; height: 24px; flex: none; }
.ime-du { font-family: "Liberation Serif", serif; font-style: italic; font-weight: 700; font-size: 10px; fill: #fff; text-anchor: middle; }
.ime-zh { font-size: 14px; line-height: 18px; color: #1a6fc9; font-weight: 700; margin-left: 3px; }
.ime-dot { font-family: "Liberation Sans", sans-serif; font-size: 15px; font-weight: 700; color: #1a6fc9; width: 12px; }
.ime-a { width: 16px; height: 16px; flex: none; margin-left: 4px; }
.ime-g { width: 16px; height: 16px; flex: none; }
```
